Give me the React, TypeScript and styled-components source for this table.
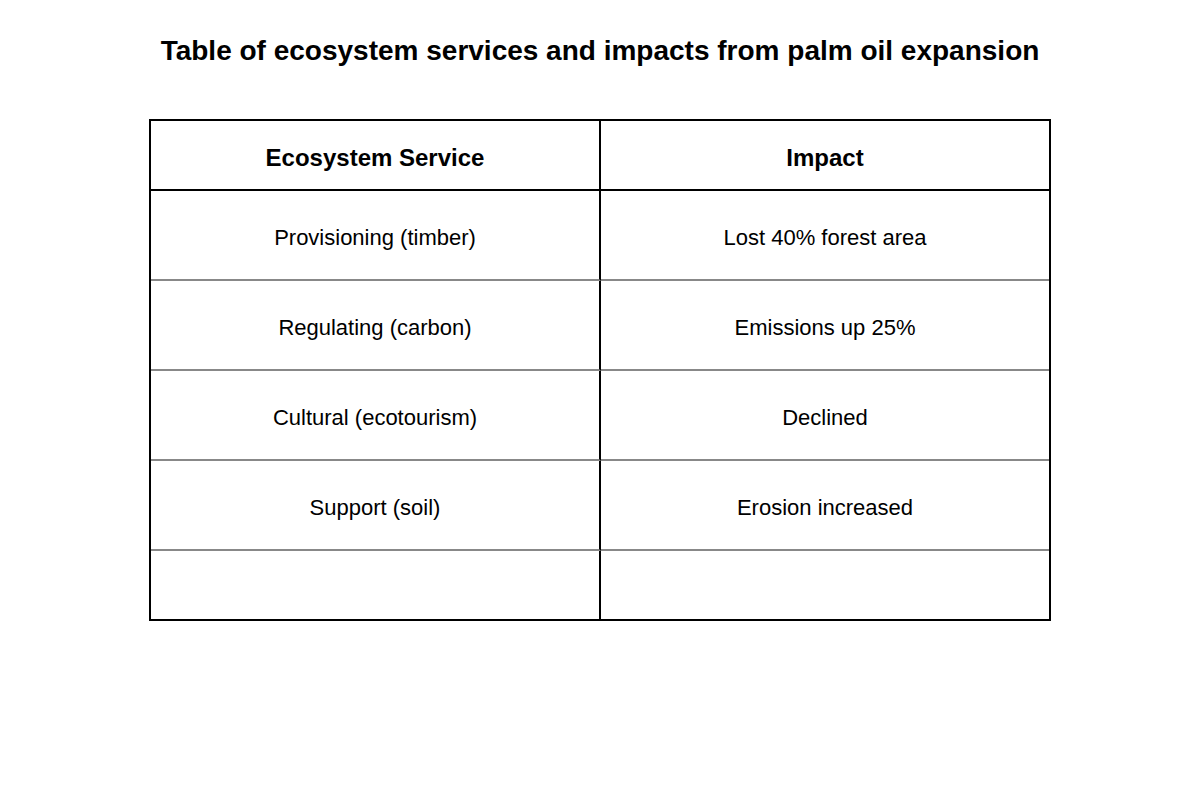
import React from 'react';
import styled, { createGlobalStyle } from 'styled-components';

const GlobalStyle = createGlobalStyle`
  body {
    margin: 0;
    background: #ffffff;
    font-family: 'Liberation Sans', Arial, sans-serif;
    color: #000000;
  }
`;

const Page = styled.div`
  width: 1200px;
  height: 800px;
  display: flex;
  flex-direction: column;
  align-items: center;
`;

const Title = styled.h1`
  margin: 34px 0 0;
  font-size: 28px;
  line-height: 34px;
  font-weight: 700;
`;

const Table = styled.div`
  margin-top: 51px;
  width: 902px;
  box-sizing: border-box;
  border: 2px solid #000000;
  display: grid;
  grid-template-columns: 450px 1fr;
`;

// content-box: height is the text area, padding-top nudges text down like the reference
const Cell = styled.div<{ $header?: boolean; $left?: boolean; $last?: boolean }>`
  height: ${({ $header, $last }) => ($header || $last ? '62px' : '82px')};
  padding-top: 6px;
  display: flex;
  align-items: center;
  justify-content: center;
  font-size: ${({ $header }) => ($header ? '24px' : '22px')};
  font-weight: ${({ $header }) => ($header ? 700 : 400)};
  border-right: ${({ $left }) => ($left ? '2px solid #000000' : 'none')};
  border-bottom: ${({ $header, $last }) =>
    $last ? 'none' : $header ? '2px solid #000000' : '2px solid #888888'};
`;

const rows = [
  ['Provisioning (timber)', 'Lost 40% forest area'],
  ['Regulating (carbon)', 'Emissions up 25%'],
  ['Cultural (ecotourism)', 'Declined'],
  ['Support (soil)', 'Erosion increased'],
  ['', ''],
];

export default function App() {
  return (
    <>
      <GlobalStyle />
      <Page>
        <Title>Table of ecosystem services and impacts from palm oil expansion</Title>
        <Table>
          <Cell $header $left>Ecosystem Service</Cell>
          <Cell $header>Impact</Cell>
          {rows.map(([service, impact], i) => {
            const last = i === rows.length - 1;
            return (
              <React.Fragment key={i}>
                <Cell $left $last={last}>{service}</Cell>
                <Cell $last={last}>{impact}</Cell>
              </React.Fragment>
            );
          })}
        </Table>
      </Page>
    </>
  );
}
